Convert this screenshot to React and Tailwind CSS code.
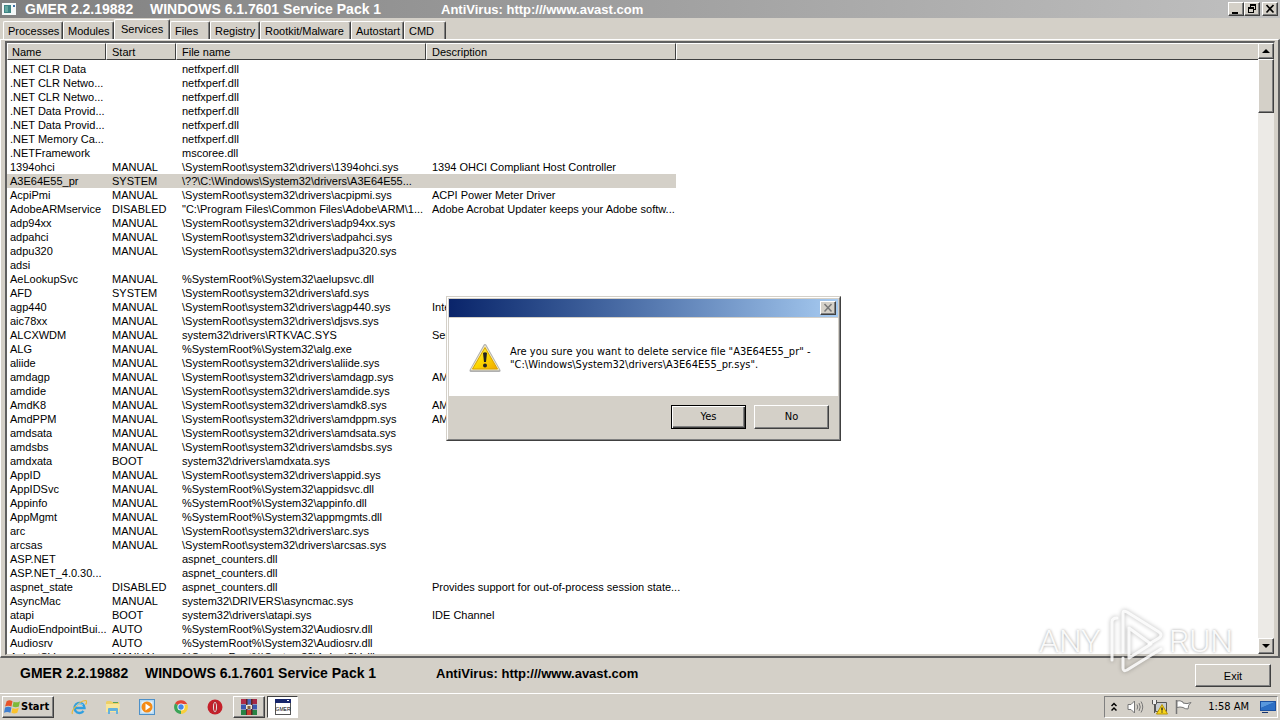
import React from "react";

const services = [
  [".NET CLR Data", "", "netfxperf.dll", ""],
  [".NET CLR Netwo...", "", "netfxperf.dll", ""],
  [".NET CLR Netwo...", "", "netfxperf.dll", ""],
  [".NET Data Provid...", "", "netfxperf.dll", ""],
  [".NET Data Provid...", "", "netfxperf.dll", ""],
  [".NET Memory Ca...", "", "netfxperf.dll", ""],
  [".NETFramework", "", "mscoree.dll", ""],
  ["1394ohci", "MANUAL", "\\SystemRoot\\system32\\drivers\\1394ohci.sys", "1394 OHCI Compliant Host Controller"],
  ["A3E64E55_pr", "SYSTEM", "\\??\\C:\\Windows\\System32\\drivers\\A3E64E55...", ""],
  ["AcpiPmi", "MANUAL", "\\SystemRoot\\system32\\drivers\\acpipmi.sys", "ACPI Power Meter Driver"],
  ["AdobeARMservice", "DISABLED", "\"C:\\Program Files\\Common Files\\Adobe\\ARM\\1...", "Adobe Acrobat Updater keeps your Adobe softw..."],
  ["adp94xx", "MANUAL", "\\SystemRoot\\system32\\drivers\\adp94xx.sys", ""],
  ["adpahci", "MANUAL", "\\SystemRoot\\system32\\drivers\\adpahci.sys", ""],
  ["adpu320", "MANUAL", "\\SystemRoot\\system32\\drivers\\adpu320.sys", ""],
  ["adsi", "", "", ""],
  ["AeLookupSvc", "MANUAL", "%SystemRoot%\\System32\\aelupsvc.dll", ""],
  ["AFD", "SYSTEM", "\\SystemRoot\\system32\\drivers\\afd.sys", ""],
  ["agp440", "MANUAL", "\\SystemRoot\\system32\\drivers\\agp440.sys", "Intel AGP Bus Filter"],
  ["aic78xx", "MANUAL", "\\SystemRoot\\system32\\drivers\\djsvs.sys", ""],
  ["ALCXWDM", "MANUAL", "system32\\drivers\\RTKVAC.SYS", "Service for Realtek AC97 Audio"],
  ["ALG", "MANUAL", "%SystemRoot%\\System32\\alg.exe", ""],
  ["aliide", "MANUAL", "\\SystemRoot\\system32\\drivers\\aliide.sys", ""],
  ["amdagp", "MANUAL", "\\SystemRoot\\system32\\drivers\\amdagp.sys", "AMD AGP Bus Filter Driver"],
  ["amdide", "MANUAL", "\\SystemRoot\\system32\\drivers\\amdide.sys", ""],
  ["AmdK8", "MANUAL", "\\SystemRoot\\system32\\drivers\\amdk8.sys", "AMD K8 Processor Driver"],
  ["AmdPPM", "MANUAL", "\\SystemRoot\\system32\\drivers\\amdppm.sys", "AMD Processor Driver"],
  ["amdsata", "MANUAL", "\\SystemRoot\\system32\\drivers\\amdsata.sys", ""],
  ["amdsbs", "MANUAL", "\\SystemRoot\\system32\\drivers\\amdsbs.sys", ""],
  ["amdxata", "BOOT", "system32\\drivers\\amdxata.sys", ""],
  ["AppID", "MANUAL", "\\SystemRoot\\system32\\drivers\\appid.sys", ""],
  ["AppIDSvc", "MANUAL", "%SystemRoot%\\System32\\appidsvc.dll", ""],
  ["Appinfo", "MANUAL", "%SystemRoot%\\System32\\appinfo.dll", ""],
  ["AppMgmt", "MANUAL", "%SystemRoot%\\System32\\appmgmts.dll", ""],
  ["arc", "MANUAL", "\\SystemRoot\\system32\\drivers\\arc.sys", ""],
  ["arcsas", "MANUAL", "\\SystemRoot\\system32\\drivers\\arcsas.sys", ""],
  ["ASP.NET", "", "aspnet_counters.dll", ""],
  ["ASP.NET_4.0.30...", "", "aspnet_counters.dll", ""],
  ["aspnet_state", "DISABLED", "aspnet_counters.dll", "Provides support for out-of-process session state..."],
  ["AsyncMac", "MANUAL", "system32\\DRIVERS\\asyncmac.sys", ""],
  ["atapi", "BOOT", "system32\\drivers\\atapi.sys", "IDE Channel"],
  ["AudioEndpointBui...", "AUTO", "%SystemRoot%\\System32\\Audiosrv.dll", ""],
  ["Audiosrv", "AUTO", "%SystemRoot%\\System32\\Audiosrv.dll", ""],
  ["AxInstSV", "MANUAL", "%SystemRoot%\\System32\\AxInstSV.dll", ""],
];

const raised =
  "bg-[#d4d0c8] border border-t-white border-l-white border-r-[#404040] border-b-[#404040] shadow-[inset_-1px_-1px_0_#808080]";
const headCell =
  "h-[17px] p-0 text-left align-bottom font-normal leading-[14px] bg-[#d4d0c8] border-t border-l border-t-white border-l-white border-r border-b border-r-[#404040] border-b-[#404040]";

const tabs = [
  ["Processes", "w-[60px]"],
  ["Modules", "w-[51px]"],
  ["Services", "w-[56px]"],
  ["Files", "w-[40px]"],
  ["Registry", "w-[50px]"],
  ["Rootkit/Malware", "w-[91px]"],
  ["Autostart", "w-[53px]"],
  ["CMD", "w-[42px]"],
];

function AppInfo({ className }) {
  return (
    <div className={`flex items-baseline whitespace-pre text-[14px] font-bold leading-4 ${className}`}>
      <span className="w-[125px]">GMER 2.2.19882</span>
      <span className="w-[291px]">WINDOWS 6.1.7601 Service Pack 1</span>
      <span className="text-[13px]">AntiVirus: http:///www.avast.com</span>
    </div>
  );
}

function TitleBar() {
  return (
    <header className="flex h-[18px] shrink-0 items-center bg-linear-to-r from-[#808080] to-[#c0c0c0] pl-[2px] pr-[2px] text-white">
      <svg width="14" height="12" viewBox="0 0 14 12" aria-hidden="true">
        <rect width="14" height="12" fill="#f4f8f8" />
        <rect x="2" y="2" width="7" height="8" fill="#3e8585" />
        <rect x="3" y="3" width="3" height="6" fill="#65a8a0" />
        <rect x="11" y="2" width="2" height="2" fill="#3d70a8" />
      </svg>
      <AppInfo className="flex-1 pl-[9px]" />
      <button aria-label="Minimize" className={`h-[14px] w-4 ${raised}`}>
        <svg width="14" height="12" viewBox="0 0 14 12"><path d="M3 9h6v2H3z" /></svg>
      </button>
      <button aria-label="Restore" className={`h-[14px] w-4 ${raised}`}>
        <svg width="14" height="12" viewBox="0 0 14 12" fill="none" stroke="#000" shapeRendering="crispEdges">
          <path d="M5 1h6M5 2.5h5.500v4H9M5.500 2v2M3 4h6M3.500 5v4.500h5V4M3 5.500h6" />
        </svg>
      </button>
      <button aria-label="Close" className={`ml-[2px] h-[14px] w-4 ${raised}`}>
        <svg width="14" height="12" viewBox="0 0 14 12"><path d="M3.500 2l7 7.500M10.500 2l-7 7.500" stroke="#000" strokeWidth="1.700" /></svg>
      </button>
    </header>
  );
}

function Tabs() {
  return (
    <nav role="tablist" className="flex h-[21px] shrink-0 items-end pl-[3px]">
      {tabs.map(([name, width]) => {
        const active = name === "Services";
        return (
          <button
            key={name}
            role="tab"
            aria-selected={active}
            className={`${width} ${active ? "h-5 pb-[2px] pl-[6px]" : "h-[18px] pl-1"} shrink-0 whitespace-nowrap rounded-t-[2px] border-t border-l border-r border-t-white border-l-white border-r-[#404040] text-left shadow-[inset_-1px_0_0_#808080]`}
          >
            {name}
          </button>
        );
      })}
    </nav>
  );
}

function ServiceTable() {
  return (
    <table className="w-full table-fixed border-separate border-spacing-0">
      <colgroup>
        <col className="w-[99px]" />
        <col className="w-[70px]" />
        <col className="w-[250px]" />
        <col className="w-[250px]" />
        <col />
      </colgroup>
      <thead>
        <tr>
          <th className={`${headCell} pl-1`}>Name</th>
          <th className={`${headCell} pl-[5px]`}>Start</th>
          <th className={`${headCell} pl-[5px]`}>File name</th>
          <th className={`${headCell} pl-[5px]`}>Description</th>
          <td className={`${headCell} border-r-0`} />
        </tr>
        <tr aria-hidden="true">
          <td colSpan={5} className="h-[2px] p-0" />
        </tr>
      </thead>
      <tbody>
        {services.map((row, i) => (
          <tr key={i}>
            {row.map((cell, c) => (
              <td
                key={c}
                className={`h-[14px] whitespace-nowrap p-0 leading-[14px] ${c === 0 ? "pl-[3px]" : "pl-[6px]"} ${row[0] === "A3E64E55_pr" ? "bg-[#d4d0c8]" : ""}`}
              >
                {cell}
              </td>
            ))}
            <td className="p-0" />
          </tr>
        ))}
      </tbody>
    </table>
  );
}

function ScrollBar() {
  return (
    <div className="flex w-4 shrink-0 flex-col bg-[#eceae6]">
      <button aria-label="Scroll up" className={`flex h-4 items-center justify-center ${raised}`}>
        <svg width="8" height="4" viewBox="0 0 8 4"><path d="M0 4L4 0l4 4z" /></svg>
      </button>
      <div className={`h-[54px] ${raised}`} />
      <div className="flex-1" />
      <button aria-label="Scroll down" className={`flex h-4 items-center justify-center ${raised}`}>
        <svg width="8" height="4" viewBox="0 0 8 4"><path d="M0 0h8L4 4z" /></svg>
      </button>
    </div>
  );
}

function Dialog() {
  return (
    <div
      role="alertdialog"
      aria-label="Confirm delete"
      className="absolute left-[446px] top-[296px] w-[395px] border border-t-[#d4d0c8] border-l-[#d4d0c8] border-r-[#404040] border-b-[#404040] bg-[#d4d0c8] font-['DejaVu_Sans_Condensed','DejaVu_Sans',sans-serif]"
    >
      <div className="border border-t-white border-l-white border-r-[#808080] border-b-[#808080] p-px">
        <div className="flex h-[18px] items-center justify-end bg-linear-to-r from-[#0a246a] to-[#a6caf0] pr-[2px]">
          <button aria-label="Close" className={`h-[14px] w-4 ${raised}`}>
            <svg width="14" height="12" viewBox="0 0 14 12"><path d="M3.500 2l7 7.500M10.500 2l-7 7.500" stroke="#777" strokeWidth="1.500" /></svg>
          </button>
        </div>
        <div className="mt-px flex h-[78px] items-center bg-white pl-5 pt-[2px]">
          <svg width="32" height="32" viewBox="0 0 32 32" aria-hidden="true">
            <defs>
              <linearGradient id="warn" x1="0" y1="0" x2="1" y2="1">
                <stop offset="0" stopColor="#fff36a" />
                <stop offset=".5" stopColor="#fcd800" />
                <stop offset="1" stopColor="#f0a800" />
              </linearGradient>
            </defs>
            <path d="M16 3.500L30 28.500H2z" fill="#aaa" stroke="#b0b0b0" strokeWidth="3" strokeLinejoin="round" />
            <path d="M16 4L29.500 27.500H2.500z" fill="#f8f4dc" stroke="#f1e9c0" strokeWidth="1.500" strokeLinejoin="round" />
            <path d="M16 5.500L28.500 27H3.500z" fill="url(#warn)" stroke="#d9a300" strokeLinejoin="round" />
            <path d="M14 11q2-1.500 4 0l-1 9h-2z" fill="#222" />
            <circle cx="16" cy="23.500" r="2" fill="#222" />
          </svg>
          <p className="pl-[9px] text-[11px] leading-[13px]">
            Are you sure you want to delete service file "A3E64E55_pr" -<br />
            "C:\Windows\System32\drivers\A3E64E55_pr.sys".
          </p>
        </div>
        <div className="flex h-[42px] items-center justify-end gap-2 pr-[9px] text-[11px]">
          <button className="h-6 w-[75px] border border-black bg-[#d4d0c8] shadow-[inset_1px_1px_0_#fff,inset_-1px_-1px_0_#404040,inset_-2px_-2px_0_#808080]">
            Yes
          </button>
          <button className={`h-6 w-[75px] ${raised}`}>No</button>
        </div>
      </div>
    </div>
  );
}

function Watermark() {
  return (
    <div
      aria-hidden="true"
      className="pointer-events-none absolute left-[1039px] top-[608px] flex h-[66px] w-[194px] items-center justify-between font-['Roboto',sans-serif] text-[32px] font-light leading-none text-white/90 [text-shadow:0_0_3px_#00000066]"
    >
      <span>ANY</span>
      <svg className="absolute left-[70px] top-0 drop-shadow-[0_0_2px_#00000055]" width="58" height="66" viewBox="0 0 58 66" fill="none" stroke="#fff" strokeOpacity=".85" strokeWidth="3" strokeLinejoin="round" strokeLinecap="round">
        <path d="M3 52V14q0-4 5-4" />
        <path d="M14 44V5q0-3 4-1l32 20q4 3 0 6l-10 6" />
        <path d="M20 20v30l22-14z" />
        <path d="M14 50v10q0 4 4 2l34-21" />
      </svg>
      <span>RUN</span>
    </div>
  );
}

function WindowsLogo() {
  return (
    <svg width="17" height="17" viewBox="0 0 16 16" aria-hidden="true">
      <path d="M2.500 2Q5 .5 8 2L7 7Q4 5.500 1 7z" fill="#e8542a" />
      <path d="M9 2.500q3 1.500 6-.5l-1 5q-3 1.500-6 0z" fill="#7db93a" />
      <path d="M1 8q3-1.500 6 0l-1 5q-3-1.500-6 0z" fill="#3f7fd0" />
      <path d="M8 8.500q3 1.500 6-.5l-1.500 5q-3 1.500-5.500 0z" fill="#fbc22c" />
    </svg>
  );
}

const launchers = [
  [
    "Internet Explorer",
    <>
      <path d="M4 9h9.500A5 5 0 1 0 12.500 12" fill="none" stroke="#2f9fe0" strokeWidth="2.400" />
      <path d="M1.500 15C-.5 12 8 2 14.500 1.500c2 .2 1 3 0 4" fill="none" stroke="#e9b93a" strokeWidth="1.200" />
      <path d="M5 7q3-4 7-1" fill="none" stroke="#8ed1f6" />
    </>,
  ],
  [
    "Explorer",
    <>
      <path d="M1 3l1-1h4l1 1h7v10H1z" fill="#edcf66" />
      <path d="M1 5h14l-1 8H1z" fill="#f8e69a" />
      <path d="M3 15v-5q0-1 1-1h8q1 0 1 1v5h-2v-3H5v3z" fill="#65b2dc" />
      <path d="M8 3h5v1H8z" fill="#58a35b" />
    </>,
  ],
  [
    "Media Player",
    <>
      <rect x=".5" y=".5" width="15" height="15" fill="#b8daf2" stroke="#4d90c8" />
      <rect x="2.500" y="2.500" width="11" height="11" fill="#e9f4fb" />
      <circle cx="8" cy="8" r="5.500" fill="#f58b16" />
      <path d="M6.500 4.500v7L11.500 8z" fill="#fff" />
    </>,
  ],
  [
    "Chrome",
    <>
      <path d="M8 8L2 4.500A7 7 0 0 1 14.200 5H8z" fill="#e24436" />
      <path d="M8 8l6.200-3A7 7 0 0 1 8 15z" fill="#f8cf3c" />
      <path d="M8 8v7A7 7 0 0 1 2 4.500z" fill="#3ba457" />
      <circle cx="8" cy="8" r="3.600" fill="#fff" />
      <circle cx="8" cy="8" r="2.700" fill="#4285e8" />
    </>,
  ],
  [
    "Opera",
    <>
      <circle cx="8" cy="8" r="7.500" fill="#c5202a" />
      <ellipse cx="8" cy="8" rx="2.500" ry="5.500" fill="#f0e4e4" stroke="#941720" strokeWidth=".8" />
      <ellipse cx="8" cy="8" rx="1" ry="4.200" fill="#c5202a" />
    </>,
  ],
];

function TaskBar() {
  return (
    <footer className="flex h-[27px] shrink-0 items-center border-t border-white pl-[2px] pr-[2px] font-['DejaVu_Sans_Condensed','DejaVu_Sans',sans-serif]">
      <button className={`flex h-[22px] w-[52px] items-center pl-px text-[11px] font-bold ${raised}`}>
        <WindowsLogo />
        Start
      </button>
      <div className="flex gap-[18px] pl-[17px]">
        {launchers.map(([name, art]) => (
          <button key={name} aria-label={name}>
            <svg width="16" height="16" viewBox="0 0 16 16">{art}</svg>
          </button>
        ))}
      </div>
      <button aria-label="WinRAR" className={`ml-[10px] flex h-[22px] w-8 items-center justify-center ${raised}`}>
        <svg width="16" height="16" viewBox="0 0 16 16">
          <path d="M0 0h5v5H0z" fill="#b02c48" />
          <path d="M6 0h5v5H6z" fill="#4b68b8" />
          <path d="M11 0h5v5h-5z" fill="#a52745" />
          <path d="M0 5.500h16v5H0z" fill="#3b58b0" />
          <path d="M0 11h16v5H0z" fill="#278445" />
          <path d="M5 0h1.500v16H5zM10 0h1.500v16H10z" fill="#5d2626" />
          <path d="M6 11h4v5H6z" fill="#c73e2e" />
          <path d="M5 6h6v4H5z" fill="#eee5d0" />
          <path d="M6.500 7h3v3h-3z" fill="#806040" />
        </svg>
      </button>
      <button aria-label="GMER" className="ml-[2px] flex h-[22px] w-[31px] items-center justify-center border border-t-[#404040] border-l-[#404040] border-r-white border-b-white bg-white">
        <svg width="16" height="16" viewBox="0 0 16 16">
          <rect x=".5" y=".5" width="15" height="15" fill="#fff" stroke="#555" />
          <path d="M0 0h16v4H0z" fill="#17266c" />
          <path d="M12 1h2v1h-2z" fill="#fff" />
          <text x="8" y="12" fontSize="5" textAnchor="middle" fontFamily="Liberation Sans, sans-serif">GMER</text>
        </svg>
      </button>
      <div className="ml-auto flex h-[22px] items-center border border-t-[#808080] border-l-[#808080] border-r-white border-b-white pl-[6px] pr-px">
        <button aria-label="Show hidden icons">
          <svg width="6" height="10" viewBox="0 0 6 10" fill="none" stroke="#000" strokeWidth="1.500"><path d="M.5 4L3 1.500 5.500 4M.5 8.500L3 6l2.500 2.500" /></svg>
        </button>
        <svg className="ml-[10px]" width="17" height="16" viewBox="0 0 17 16" fill="none" stroke="#777">
          <path d="M1 5.500h3L7.500 2v12L4 10.500H1z" fill="#fff" />
          <path d="M10 5.500q1.500 2.500 0 5M12 4q2.500 4 0 8M14 2.500q3.500 5.500 0 11" />
        </svg>
        <svg className="ml-[7px]" width="17" height="16" viewBox="0 0 17 16">
          <path d="M4.500 3.500h11v9h-11z" fill="#c7ccd0" stroke="#555" />
          <path d="M1.500 1v4h4V1M3.500 5v9" fill="none" stroke="#555" />
          <path d="M2 1h3v4H2z" fill="#eee" />
          <path d="M11 5.500L16.500 15h-11z" fill="#f8d51b" stroke="#b99505" />
          <path d="M11 8.500v3M11 12.500v1" stroke="#222" strokeWidth="1.400" />
        </svg>
        <svg className="ml-[7px]" width="17" height="16" viewBox="0 0 17 16" fill="#fff" stroke="#777">
          <path d="M1.500 1v14" strokeWidth="1.500" />
          <path d="M2 2q3-1 6 1v1q4 1.500 8-.5-3 2-3 6.500-3 0-5-1.500Q5 7.500 2 8.500z" />
        </svg>
        <time className="ml-4 text-[11px]">1:58 AM</time>
        <svg className="ml-[11px]" width="16" height="14" viewBox="0 0 16 14">
          <path d="M0 1h16v10H0z" fill="#1c509f" />
          <path d="M1 2h14L1 8z" fill="#5998dd" />
          <path d="M1 8L15 2v8H1z" fill="#2c6fc5" />
          <path d="M2 12h6v1H2z" fill="#16346d" />
        </svg>
      </div>
    </footer>
  );
}

export default function App() {
  return (
    <div className="relative flex h-screen flex-col overflow-hidden bg-[#d4d0c8] font-['Liberation_Sans',Arial,sans-serif] text-[11px] leading-4 text-black">
      <TitleBar />
      <Tabs />
      <main className="flex min-h-0 flex-1 flex-col border-t border-l border-r-2 border-b-2 border-t-white border-l-white border-r-[#606060] border-b-[#606060] pl-1 pr-[3px] pt-px pb-px">
        <div className="flex min-h-0 flex-1 border-t-2 border-l-2 border-r border-b border-t-[#606060] border-l-[#606060] border-r-[#d4d0c8] border-b-[#d4d0c8] bg-white">
          <div className="min-w-0 flex-1 overflow-hidden">
            <ServiceTable />
          </div>
          <ScrollBar />
        </div>
      </main>
      <section className="flex h-[35px] shrink-0 items-start justify-between pl-5 pr-[9px] pt-[6px]">
        <AppInfo className="pt-px" />
        <button className={`h-[23px] w-[76px] ${raised}`}>Exit</button>
      </section>
      <TaskBar />
      <Dialog />
      <Watermark />
    </div>
  );
}
